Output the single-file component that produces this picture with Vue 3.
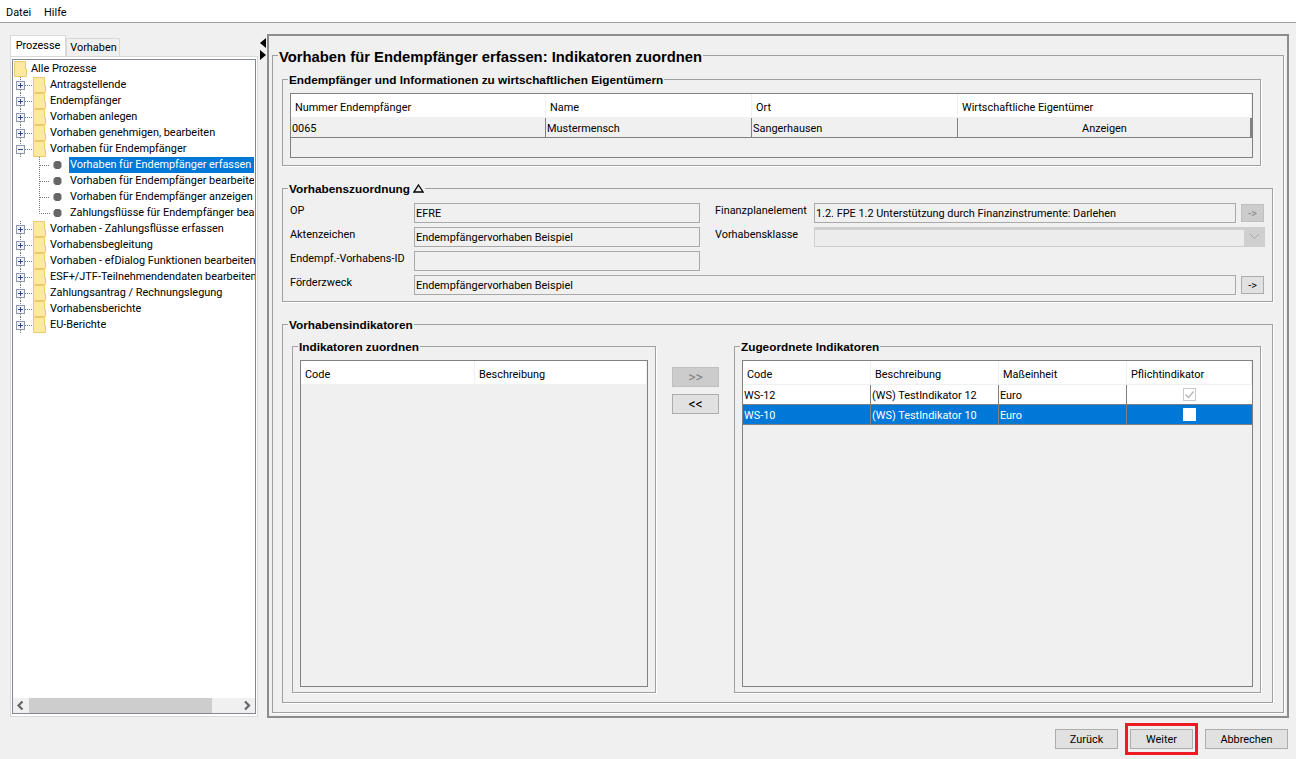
<template>
  <div class="app">
    <div class="menu_bar">
      <span>Datei</span>
      <span>Hilfe</span>
    </div>

    <div class="main">
      <div class="left_panel">
        <div class="tabs">
          <div class="tab active">Prozesse</div>
          <div class="tab">Vorhaben</div>
        </div>
        <div class="tab_pane">
          <div class="tree_box">
            <div class="tree">
              <div v-for="row in tree_rows" :key="row.label" class="tree_row" :class="row.kind">
                <svg v-if="row.kind != 'root'" class="gutter" :width="row.kind == 'leaf' ? 48 : 19" height="16">
                  <template v-if="row.kind == 'node'">
                    <path d="M6.500 0V4M6.500 13V16M11 8.500H19" class="dots" />
                    <rect x="2.500" y="4.500" width="8" height="8" fill="#f4f4f4" stroke="#8e9aa8" />
                    <path d="M4 8.500H9" stroke="#2b4a86" />
                    <path v-if="!row.open" d="M6.500 6V11" stroke="#2b4a86" />
                  </template>
                  <template v-if="row.kind == 'leaf'">
                    <path :d="row.last ? 'M25.500 0V8.500H36' : 'M25.500 0V16M26 8.500H36'" class="dots" />
                    <path d="M41.500 4h4l2 2v4l-2 2h-4l-2-2v-4z" fill="#666" />
                  </template>
                </svg>
                <svg v-if="row.kind != 'leaf'" class="folder" width="13" height="16">
                  <path d="M.5.5H11.500V8.500H12.500V15.500H.5Z" fill="#fde9a0" stroke="#eccb6e" />
                </svg>
                <span class="tree_label" :class="{ selected: row.selected }">{{ row.label }}</span>
              </div>
            </div>
            <div class="h_scroll">
              <svg class="scroll_arrow" width="16" height="15"><path d="M9.500 3.500L5.500 7.500L9.500 11.500" fill="none" stroke="#666" stroke-width="2.200" /></svg>
              <div class="scroll_track"><div class="scroll_thumb"></div></div>
              <svg class="scroll_arrow" width="17" height="15"><path d="M7 3.500L11 7.500L7 11.500" fill="none" stroke="#666" stroke-width="2.200" /></svg>
            </div>
          </div>
        </div>
      </div>

      <div class="splitter">
        <svg width="7" height="10"><path d="M6 0V10L0 5Z" fill="#000" /></svg>
        <svg width="7" height="10"><path d="M0 0V10L6 5Z" fill="#000" /></svg>
      </div>

      <div class="right_panel">
        <fieldset class="group title_group">
          <legend class="page_title">Vorhaben für Endempfänger erfassen: Indikatoren zuordnen</legend>

          <fieldset class="group recipients">
            <legend>Endempfänger und Informationen zu wirtschaftlichen Eigentümern</legend>
            <div class="table_box">
              <table class="grid">
                <colgroup>
                  <col style="width:255px" /><col style="width:206px" /><col style="width:206px" /><col />
                </colgroup>
                <thead>
                  <tr class="head_row">
                    <th>Nummer Endempfänger</th><th>Name</th><th>Ort</th><th>Wirtschaftliche Eigentümer</th>
                  </tr>
                </thead>
                <tbody>
                  <tr>
                    <td>0065</td><td>Mustermensch</td><td>Sangerhausen</td><td class="cell_button">Anzeigen</td>
                  </tr>
                </tbody>
              </table>
            </div>
          </fieldset>

          <fieldset class="group assignment">
            <legend>Vorhabenszuordnung <svg class="collapse_mark" width="11" height="9"><path d="M5.500 1L10 8H1Z" fill="none" stroke="#000" stroke-width="1.300" /></svg></legend>
            <div class="assign_grid">
              <label>OP</label>
              <div class="field">EFRE</div>
              <label class="second">Finanzplanelement</label>
              <div class="field">1.2. FPE 1.2 Unterstützung durch Finanzinstrumente: Darlehen</div>
              <button class="btn small disabled">-&gt;</button>

              <label>Aktenzeichen</label>
              <div class="field">Endempfängervorhaben Beispiel</div>
              <label class="second">Vorhabensklasse</label>
              <div class="combo">
                <div class="combo_arrow">
                  <svg width="11" height="7"><path d="M1 1L5.500 5.500L10 1" fill="none" stroke="#a8a8a8" /></svg>
                </div>
              </div>

              <label>Endempf.-Vorhabens-ID</label>
              <div class="field"></div>
              <div class="empty_cell"></div>

              <label>Förderzweck</label>
              <div class="field wide">Endempfängervorhaben Beispiel</div>
              <button class="btn small">-&gt;</button>
            </div>
          </fieldset>

          <fieldset class="group indicators">
            <legend>Vorhabensindikatoren</legend>
            <div class="indicator_columns">
              <fieldset class="group available">
                <legend>Indikatoren zuordnen</legend>
                <div class="table_box tall">
                  <table class="grid">
                    <colgroup><col style="width:174px" /><col /></colgroup>
                    <thead>
                      <tr class="head_row"><th>Code</th><th>Beschreibung</th></tr>
                    </thead>
                  </table>
                </div>
              </fieldset>

              <div class="move_buttons">
                <button class="btn move disabled">&gt;&gt;</button>
                <button class="btn move">&lt;&lt;</button>
              </div>

              <fieldset class="group assigned">
                <legend>Zugeordnete Indikatoren</legend>
                <div class="table_box tall">
                  <table class="grid">
                    <colgroup>
                      <col style="width:128px" /><col style="width:128px" /><col style="width:128px" /><col />
                    </colgroup>
                    <thead>
                      <tr class="head_row">
                        <th>Code</th><th>Beschreibung</th><th>Maßeinheit</th><th>Pflichtindikator</th>
                      </tr>
                    </thead>
                    <tbody>
                      <tr v-for="row in assigned_rows" :key="row.code" class="white_row" :class="{ selected: row.selected }">
                        <td>{{ row.code }}</td>
                        <td>{{ row.description }}</td>
                        <td>Euro</td>
                        <td class="check_cell">
                          <svg width="13" height="13">
                            <rect x=".5" y=".5" width="12" height="12" fill="#fff" :stroke="row.selected ? '#fff' : '#c8c8c8'" />
                            <path v-if="row.checked" d="M2.500 6.500L5.500 9.500L10.500 3.500" fill="none" stroke="#b4b4b4" stroke-width="1.300" />
                          </svg>
                        </td>
                      </tr>
                    </tbody>
                  </table>
                </div>
              </fieldset>
            </div>
          </fieldset>
        </fieldset>
      </div>
    </div>

    <div class="footer">
      <button class="btn nav">Zurück</button>
      <div class="highlight"><button class="btn nav">Weiter</button></div>
      <button class="btn nav cancel">Abbrechen</button>
    </div>
  </div>
</template>

<script setup>
const top_nodes = [
  'Antragstellende',
  'Endempfänger',
  'Vorhaben anlegen',
  'Vorhaben genehmigen, bearbeiten',
]
const after_nodes = [
  'Vorhaben - Zahlungsflüsse erfassen',
  'Vorhabensbegleitung',
  'Vorhaben - efDialog Funktionen bearbeiten',
  'ESF+/JTF-Teilnehmendendaten bearbeiten',
  'Zahlungsantrag / Rechnungslegung',
  'Vorhabensberichte',
  'EU-Berichte',
]
const tree_rows = [
  { label: 'Alle Prozesse', kind: 'root' },
  ...top_nodes.map(label => ({ label, kind: 'node' })),
  { label: 'Vorhaben für Endempfänger', kind: 'node', open: true },
  { label: 'Vorhaben für Endempfänger erfassen', kind: 'leaf', selected: true },
  { label: 'Vorhaben für Endempfänger bearbeiten', kind: 'leaf' },
  { label: 'Vorhaben für Endempfänger anzeigen', kind: 'leaf' },
  { label: 'Zahlungsflüsse für Endempfänger bearbeiten', kind: 'leaf', last: true },
  ...after_nodes.map(label => ({ label, kind: 'node' })),
]
const assigned_rows = [
  { code: 'WS-12', description: '(WS) TestIndikator 12', checked: true },
  { code: 'WS-10', description: '(WS) TestIndikator 10', selected: true },
]
</script>

<style>
html, body {
  margin: 0;
  background: #f0f0f0;
}
</style>

<style scoped>
* {
  box-sizing: border-box;
}
.app {
  height: 759px;
  overflow: hidden;
  background: #f0f0f0;
  color: #000;
  font-family: Roboto, "Liberation Sans", Arial, sans-serif;
  font-size: 10.900px;
  display: flex;
  flex-direction: column;
}
.menu_bar {
  height: 23px;
  background: #fff;
  border-bottom: 1px solid #a0a0a0;
  padding: 6px 0 0 6px;
  display: flex;
  gap: 13px;
  line-height: 14px;
}
.main {
  height: 694px;
  display: flex;
  padding: 11px 0 0 10px;
}
.left_panel {
  width: 248px;
  height: 683px;
  display: flex;
  flex-direction: column;
}
.tabs {
  display: flex;
  align-items: flex-end;
  height: 21px;
  margin-top: 1px;
}
.tab {
  width: 54px;
  height: 18px;
  background: #f0f0f0;
  border: 1px solid #d9d9d9;
  border-bottom: 0;
  padding-left: 1px;
  text-align: center;
  line-height: 18px;
}
.tab.active {
  width: 56px;
  height: 21px;
  background: #fff;
  padding-left: 0;
  line-height: 19px;
}
.tab_pane {
  flex: 1;
  border: 1px solid #d9d9d9;
  background: #fff;
  padding: 2px 1px 2px 1px;
  min-height: 0;
}
.tree_box {
  height: 100%;
  border: 1px solid #828790;
  display: flex;
  flex-direction: column;
  background: #fff;
}
.tree {
  flex: 1;
  overflow: hidden;
  padding: 1px 0 0 1px;
}
.tree_row {
  height: 16px;
  display: flex;
  align-items: center;
  white-space: nowrap;
}
.gutter,
.folder {
  flex: none;
}
.dots {
  fill: none;
  stroke: #777;
  stroke-dasharray: 1 1;
}
.tree_label {
  margin-left: 3px;
  height: 16px;
  line-height: 16px;
  padding-left: 1px;
  flex: none;
}
.tree_row.leaf .tree_label {
  margin-left: 7px;
  width: 185px;
  overflow: hidden;
}
.tree_label.selected {
  background: #0078d7;
  color: #fff;
}
.h_scroll {
  height: 15px;
  display: flex;
  background: #f0f0f0;
}
.scroll_arrow {
  flex: none;
}
.scroll_track {
  flex: 1;
}
.scroll_thumb {
  width: 183px;
  height: 100%;
  background: #cdcdcd;
}
.splitter {
  width: 9px;
  padding: 4px 0 0 2px;
  display: flex;
  flex-direction: column;
  gap: 2px;
}
.right_panel {
  width: 1022px;
  height: 684px;
  border: 2px solid #8c8c8c;
  padding: 8px 3px 3px 3px;
}
.group {
  margin: 0;
  min-width: 0;
  border: 1px solid #a0a0a0;
  box-shadow: 1px 1px 0 #fff;
  padding: 0;
  flex: none;
}
.group > legend {
  font-family: "Liberation Sans", Arial, sans-serif;
  font-size: 11.800px;
  font-weight: bold;
  padding: 2px 1px 0;
  margin-left: -2px;
  line-height: 14px;
  white-space: nowrap;
}
.group > legend.page_title {
  font-size: 14.800px;
  line-height: 18px;
  padding-top: 4px;
  margin-left: -4px;
}
.indicators > legend {
  margin-left: -4px;
}
.title_group {
  height: 669px;
  padding-left: 9px;
}
.recipients {
  width: 979px;
  height: 95px;
  margin-top: 5px;
  padding: 6px 7px 0;
}
.assignment {
  width: 991px;
  height: 122px;
  margin-top: 14px;
  padding: 7px 7px 0;
}
.indicators {
  width: 991px;
  height: 387px;
  margin-top: 14px;
  padding: 6px 9px 0;
}
.table_box {
  height: 65px;
  border: 1px solid #808080;
  background: #f0f0f0;
  overflow: hidden;
}
.table_box.tall {
  height: 327px;
}
.grid {
  width: 100%;
  table-layout: fixed;
  border-collapse: separate;
  border-spacing: 0;
}
.grid th {
  height: 24px;
  background: #fff;
  border-right: 1px solid #f0f0f0;
  border-bottom: 1px solid #f0f0f0;
  font-weight: normal;
  text-align: left;
  padding: 3px 0 0 4px;
}
.grid td {
  height: 20px;
  padding: 1px 0 0 1px;
  border-right: 1px solid #808080;
  border-bottom: 1px solid #808080;
  white-space: nowrap;
  overflow: hidden;
}
.grid td:last-child {
  border-right: 0;
}
.grid td.cell_button {
  text-align: center;
  border-right: 2px solid #808080;
}
.white_row td {
  background: #fff;
}
.white_row.selected td {
  background: #0078d7;
  color: #fff;
}
.grid td.check_cell {
  text-align: center;
  line-height: 0;
  padding: 0;
}
.check_cell svg {
  vertical-align: middle;
}
.assign_grid {
  display: grid;
  grid-template-columns: 124px 286px 114px 422px 28px;
  grid-auto-rows: 20px;
  row-gap: 4px;
  align-items: center;
}
.assign_grid label {
  align-self: start;
  padding-top: 1px;
  line-height: 14px;
  white-space: nowrap;
}
.assign_grid label.second {
  padding-left: 15px;
}
.field {
  height: 20px;
  border: 1px solid #a9a9a9;
  padding-left: 1px;
  line-height: 20px;
  white-space: nowrap;
  overflow: hidden;
}
.field.wide {
  grid-column: 2 / span 3;
}
.empty_cell {
  grid-column: 3 / span 3;
}
.combo {
  grid-column: 4 / span 2;
  width: 451px;
  height: 20px;
  border: 1px solid #cfcfcf;
  border-top-width: 3px;
  background: #ececec;
  display: flex;
  justify-content: flex-end;
}
.combo_arrow {
  width: 20px;
  margin-top: -3px;
  background: #cfcfcf;
  display: flex;
  align-items: center;
  justify-content: center;
}
.btn {
  font-family: inherit;
  font-size: 10.900px;
  color: #000;
  background: #e1e1e1;
  border: 1px solid #adadad;
  padding: 0;
  margin: 0;
}
.btn.disabled {
  background: #cccccc;
  border-color: #bfbfbf;
  color: #838383;
}
.btn.small {
  width: 23px;
  height: 18px;
  margin-left: 5px;
}
.indicator_columns {
  display: flex;
}
.available {
  width: 364px;
  height: 355px;
  padding: 6px 7px 0;
}
.assigned {
  width: 527px;
  height: 355px;
  margin-left: 15px;
  padding: 6px 7px 0;
}
.move_buttons {
  width: 47px;
  margin-left: 16px;
  padding-top: 29px;
  display: flex;
  flex-direction: column;
  gap: 7px;
  flex: none;
}
.btn.move {
  width: 47px;
  height: 20px;
  flex: none;
  font-size: 14px;
  line-height: 16px;
}
.footer {
  flex: 1;
  display: flex;
  justify-content: flex-end;
  align-items: center;
  padding: 2px 8px 0 0;
}
.btn.nav {
  width: 63px;
  height: 20px;
}
.btn.cancel {
  width: 83px;
  margin-left: 7px;
}
.highlight {
  width: 73px;
  height: 32px;
  margin-left: 7px;
  border: 3px solid #ed1c24;
  padding: 3px 2px;
}
</style>
